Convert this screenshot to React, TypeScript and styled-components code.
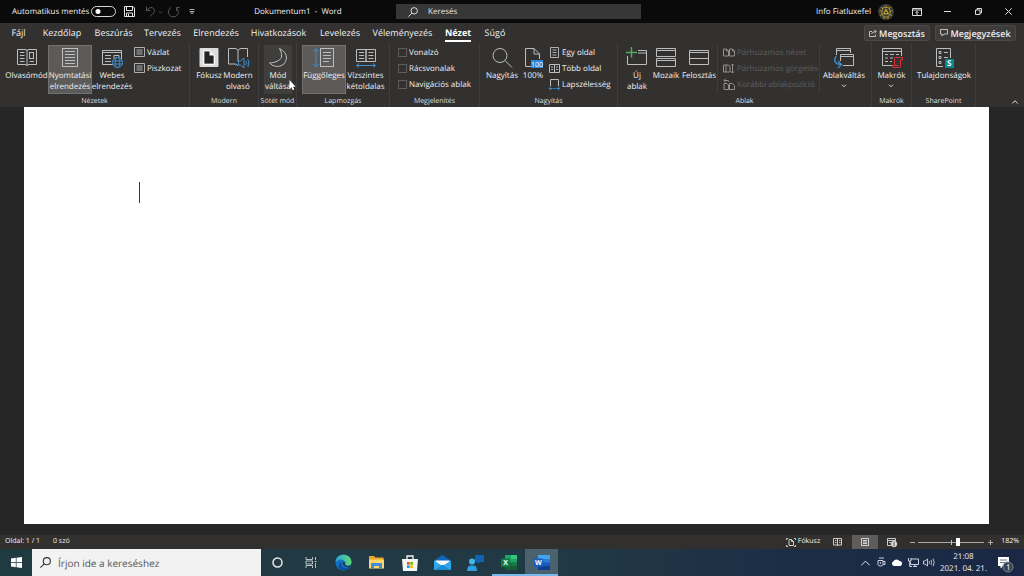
import React from 'react';
import styled, { createGlobalStyle, css } from 'styled-components';

const GlobalStyle = createGlobalStyle`
  *, *::before, *::after { box-sizing: border-box; }
  html, body { margin: 0; height: 100%; }
  body {
    font-family: 'Open Sans', 'Noto Sans', sans-serif;
    font-size: 8px;
    line-height: 11px;
    text-rendering: geometricPrecision;
    color: #f0f0f0;
    background: #262626;
    overflow: hidden;
  }
  button, input { font: inherit; color: inherit; text-rendering: inherit; margin: 0; padding: 0; border: 0; background: none; outline: none; }
`;

const Shell = styled.div`
  display: flex;
  flex-direction: column;
  min-height: 100vh;
`;

/* ---------- title bar ---------- */
const TitleBar = styled.header`
  display: flex;
  align-items: center;
  height: 23px;
  background: #0a0a0a;
`;
const QuickAccess = styled.div`
  display: flex;
  align-items: center;
  width: 200px;
  padding-left: 12px;
`;
const AutoSave = styled.label`
  display: flex;
  align-items: center;
  justify-content: space-between;
  width: 104px;
  white-space: nowrap;
`;
const Toggle = styled.input`
  appearance: none;
  width: 25px;
  height: 11px;
  border: 1px solid #d8d8d8;
  border-radius: 6px;
  background: radial-gradient(circle at 6px 50%, #fff 2px, transparent 3px);
`;
const QuickButton = styled.button<{ $w: number }>`
  display: flex;
  justify-content: center;
  align-items: center;
  width: ${(p) => p.$w}px;
  height: 20px;
`;
const DocTitle = styled.div`
  width: 196px;
  text-align: center;
  white-space: pre;
`;
const TopSearch = styled.label`
  display: flex;
  align-items: center;
  gap: 10px;
  flex: 0 1 245px;
  height: 15px;
  padding-left: 12px;
  background: #373737;
  input { flex: 1; min-width: 0; }
  input::placeholder { color: #e6e6e6; opacity: 1; }
`;
const WindowArea = styled.div`
  display: flex;
  align-items: center;
  margin-left: auto;
`;
const Account = styled.button`
  display: flex;
  align-items: center;
  gap: 7px;
  margin-right: 8px;
  white-space: nowrap;
`;

/* ---------- tabs ---------- */
const TabRow = styled.nav`
  display: flex;
  align-items: center;
  height: 20px;
  padding: 0 8px 0 3px;
  background: #323130;
`;
const Tab = styled.button<{ $w: number; $active?: boolean }>`
  display: flex;
  justify-content: center;
  width: ${(p) => p.$w}px;
  height: 20px;
  font-size: 9px;
  line-height: 20px;
  white-space: nowrap;
  ${(p) =>
    p.$active &&
    css`
      font-weight: 700;
      color: #fff;
      span { height: 19px; border-bottom: 2px solid #fff; }
    `}
`;
const TabActions = styled.div`
  display: flex;
  gap: 5px;
  margin-left: auto;
`;
const ActionButton = styled.button<{ $w: number }>`
  display: flex;
  align-items: center;
  justify-content: center;
  gap: 2px;
  width: ${(p) => p.$w}px;
  height: 16px;
  border: 1px solid #4a4948;
  border-radius: 2px;
  background: #3d3c3b;
  font-size: 9px;
  font-weight: 600;
  white-space: nowrap;
`;

/* ---------- ribbon ---------- */
const Ribbon = styled.section`
  display: flex;
  height: 64px;
  background: #323130;
`;
const GroupBox = styled.div<{ $w: number }>`
  display: flex;
  flex-direction: column;
  flex: none;
  width: ${(p) => p.$w}px;
  padding-top: 2px;
  border-right: 1px solid #3f3e3d;
`;
const GroupItems = styled.div<{ $pad: number }>`
  display: flex;
  flex: none;
  height: 52px;
  padding-left: ${(p) => p.$pad}px;
`;
const GroupName = styled.div`
  text-align: center;
  font-size: 7px;
  line-height: 10px;
  color: #dedede;
  white-space: nowrap;
`;
const BigButton = styled.button<{ $w: number; $tone?: 'selected' | 'hover' }>`
  position: relative;
  display: flex;
  flex-direction: column;
  align-items: center;
  flex: none;
  width: ${(p) => p.$w}px;
  height: 49px;
  padding-top: 2px;
  gap: 2px;
  white-space: nowrap;
  ${(p) => p.$tone === 'hover' && css`background: #3f3e3d;`}
  ${(p) =>
    p.$tone === 'selected' &&
    css`
      background: #5c5b5a;
      box-shadow: inset 0 0 0 1px #72716f;
    `}
`;
const BigLabel = styled.span`
  display: flex;
  flex-direction: column;
  align-items: center;
`;
const Stack = styled.div<{ $pad: number }>`
  display: flex;
  flex-direction: column;
  gap: 3px;
  padding-top: 1px;
  padding-left: ${(p) => p.$pad}px;
`;
const SmallButton = styled.button`
  display: flex;
  align-items: center;
  gap: 2px;
  height: 13px;
  white-space: nowrap;
  &:disabled { color: #5f5e5d; }
`;
const CheckRow = styled.label`
  display: flex;
  align-items: center;
  gap: 2px;
  height: 13px;
  white-space: nowrap;
  input {
    appearance: none;
    width: 9px;
    height: 9px;
    border: 1px solid #5e5d5c;
  }
`;
const WindowStack = styled(Stack)`
  width: 101px;
`;
const Divider = styled.div`
  width: 1px;
  margin-bottom: 4px;
  background: #3f3e3d;
`;
const CollapseButton = styled.button`
  align-self: flex-end;
  margin: 0 6px 3px auto;
`;

/* ---------- document ---------- */
const Workspace = styled.main`
  display: flex;
  flex: 1;
  padding: 0 35px 11px 24px;
  background: #262626;
`;
const Page = styled.div`
  flex: 1;
  padding: 75px 115px;
  background: #fff;
`;
const Caret = styled.div`
  width: 1px;
  height: 21px;
  background: #333;
`;

/* ---------- status bar ---------- */
const StatusBar = styled.footer`
  display: flex;
  align-items: center;
  height: 14px;
  padding: 0 5px;
  background: #32302f;
  font-size: 7px;
  line-height: 12px;
  white-space: nowrap;
`;
const PageCount = styled.span`
  width: 48px;
`;
const StatusTools = styled.div`
  display: flex;
  align-items: center;
  margin-left: auto;
`;
const StatusButton = styled.button<{ $w: number; $active?: boolean }>`
  display: flex;
  align-items: center;
  justify-content: center;
  gap: 2px;
  width: ${(p) => p.$w}px;
  height: 14px;
  background: ${(p) => (p.$active ? '#5e5d5c' : 'transparent')};
`;
const ZoomRange = styled.input`
  appearance: none;
  width: 66px;
  height: 9px;
  background:
    linear-gradient(#c4c4c4, #c4c4c4) 33px 50% / 1px 5px no-repeat,
    linear-gradient(#a8a8a8, #a8a8a8) 0 50% / 100% 1px no-repeat;
  &::-webkit-slider-thumb {
    appearance: none;
    width: 4px;
    height: 8px;
    background: #fff;
  }
`;
const ZoomValue = styled.button`
  width: 23px;
  text-align: right;
`;

/* ---------- task bar ---------- */
const TaskBar = styled.footer`
  display: flex;
  height: 27px;
  background: linear-gradient(90deg, #203a42 0%, #213944 55%, #1c2e45 76%, #1a2745 100%);
`;
const StartButton = styled.button`
  display: flex;
  align-items: center;
  justify-content: center;
  width: 32px;
`;
const TaskSearch = styled.label`
  display: flex;
  align-items: center;
  gap: 7px;
  width: 229px;
  padding-left: 8px;
  background: #f2f2f2;
  color: #444;
  font-size: 10px;
  input { flex: 1; min-width: 0; height: 16px; }
  input::placeholder { color: #555; opacity: 1; }
`;
const TaskButton = styled.button<{ $state?: 'open' | 'active' }>`
  display: flex;
  align-items: center;
  justify-content: center;
  width: 33px;
  ${(p) =>
    p.$state &&
    css`
      padding-top: 2px;
      border-bottom: 2px solid #76b9ed;
      background: ${p.$state === 'active' ? '#4a626d' : 'transparent'};
    `}
`;
const Tray = styled.div`
  display: flex;
  align-items: center;
  margin-left: auto;
`;
const TrayButton = styled.button`
  display: flex;
  justify-content: center;
  width: 16px;
`;
const Clock = styled.time`
  width: 53px;
  text-align: center;
  line-height: 12px;
  white-space: nowrap;
`;
const Notifications = styled.button`
  display: flex;
  justify-content: center;
  width: 34px;
  padding: 3px 4px 0 0;
`;

/* ---------- icons ---------- */
const BLUE = '#3c8fd0';

const Drawing = styled.svg<{ $line?: string }>`
  display: block;
  flex: none;
  fill: none;
  overflow: visible;
  stroke: ${(p) => p.$line ?? '#bdbdbd'};
`;
const Pointer = styled(Drawing)`
  position: absolute;
  left: 25px;
  top: 35px;
`;

type IconProps = { w?: number; h?: number; line?: string; children: React.ReactNode };
const Icon = ({ w = 20, h = 21, line, children }: IconProps) => (
  <Drawing width={w} height={h} viewBox={`0 0 ${w} ${h}`} $line={line} aria-hidden="true">
    {children}
  </Drawing>
);

const SearchGlyph = ({ color, size = 10 }: { color: string; size?: number }) => (
  <Drawing width={size} height={size} viewBox="0 0 10 10" $line={color} aria-hidden="true">
    <circle cx="6.2" cy="3.8" r="3.2" />
    <path d="M3.8 6.2L.4 9.6" />
  </Drawing>
);
const ReadIcon = () => (
  <Icon>
    <path d="M.5 2.500H8Q10 2.500 10 4Q10 2.500 12 2.500H19.500V17.500H12Q10 17.500 10 19Q10 17.500 8 17.500H.5ZM10 4V18" />
    <path d="M3 5.500H7.500M3 8.500H7.500M3 11.500H7.500M3 14.500H7.500M12.500 14.500H17" />
    <rect x="12.500" y="5.500" width="4" height="6" />
  </Icon>
);
const PrintLayoutIcon = () => (
  <Icon>
    <rect x="2.500" y="1.500" width="15" height="18" />
    <path d="M5 4.500H15M5 7.500H15M5 10.500H15M5 13.500H15M5 16.500H15" />
  </Icon>
);
const WebIcon = () => (
  <Icon>
    <path d="M.5 3.500H19.500V17.500H.5ZM.5 5.500H19.500" />
    <path d="M3 8.500H9M3 11.500H9M3 14.500H9" />
    <path d="M12 8.500H17V12H12Z" />
    <g stroke={BLUE}>
      <circle cx="15.500" cy="15.500" r="5" fill="#323130" />
      <ellipse cx="15.500" cy="15.500" rx="2.200" ry="5" />
      <path d="M10.500 14H20.500M10.500 17H20.500" />
    </g>
  </Icon>
);
const FocusIcon = () => (
  <Icon>
    <rect x=".5" y="1" width="19" height="19" rx="1" fill="#dcdcdc" stroke="none" />
    <path d="M5 4H10.500L15 8.500V17H5Z" fill="#242424" />
    <path d="M4.500 3.500H11L15.500 8V17.500H4.500Z" stroke="#f8f8f8" />
    <path d="M10.500 3.500V8.500H15.500Z" fill="#f8f8f8" stroke="none" />
  </Icon>
);
const ReaderIcon = () => (
  <Icon>
    <path d="M10 3.500Q9 1.500 7 1.500H.5V17H7Q9 17 10 19M10 3.500Q11 1.500 13 1.500H19.500V10M10 3.500V14.500" />
    <g stroke={BLUE}>
      <path d="M10.500 14V18H12.500L16 21V11L12.500 14Z" />
      <path d="M17.800 14Q19 16 17.800 18M19.800 12Q22 16 19.800 20" />
    </g>
  </Icon>
);
const MoonIcon = () => (
  <Icon>
    <path d="M11.500 1.500Q18.500 5 18.500 11Q17.500 19 9.500 19.500Q4.500 19.500 1.500 16Q10.500 15.500 13.500 10.500Q14.500 6.500 11.500 1.500Z" />
  </Icon>
);
const VerticalIcon = () => (
  <Icon>
    <path d="M2 2.500V18.500M-.5 4.500L2 1.500L4.500 4.500M-.5 17L2 20L4.500 17" stroke={BLUE} />
    <rect x="6.500" y="1.500" width="13" height="18" />
    <path d="M9 5.500H17M9 8.500H17M9 11.500H17M9 14.500H15" />
  </Icon>
);
const SideIcon = () => (
  <Icon>
    <path d="M.5 2.500H10V14.500H.5ZM10 2.500H19.500V14.500H10Z" />
    <path d="M3 5.500H8M3 8.500H8M3 11.500H8M12.500 5.500H17.500M12.500 8.500H17.500M12.500 11.500H17.500" />
    <path d="M1 18.500H19M3 16.500L.5 18.500L3 20.500M17 16.500L19.500 18.500L17 20.500" stroke={BLUE} />
  </Icon>
);
const ZoomIcon = () => (
  <Icon>
    <circle cx="8" cy="8.500" r="7" />
    <path d="M13 13.500L20 20.500" />
  </Icon>
);
const PercentIcon = () => (
  <Icon>
    <path d="M8 19.500H2.500V1.500H11L16.500 7V12M11 1.500V7H16.500" />
    <rect x="8" y="13" width="12" height="8" fill="#2b88d8" stroke="none" />
    <text x="8" y="20" fill="#fff" stroke="none" fontSize="7">100</text>
  </Icon>
);
const NewWindowIcon = () => (
  <Icon>
    <path d="M.5 9V17.500H19.500V3.500H11M11 6H19.500" />
    <path d="M4.500 0V10.500M-1 5.500H10" stroke="#4fae5e" strokeWidth="1.400" />
  </Icon>
);
const TileIcon = () => (
  <Icon>
    <path d="M.5 1.500H19.500V9.500H.5ZM.5 3.500H19.500M.5 11.500H19.500V19.500H.5ZM.5 13.500H19.500" />
  </Icon>
);
const SplitIcon = () => (
  <Icon>
    <path d="M.5 3.500H19.500V17.500H.5ZM.5 5.500H19.500M.5 11.500H19.500" />
  </Icon>
);
const SwitchIcon = () => (
  <Icon>
    <path d="M2.500 8V1.500H16.500V6M2.500 3.500H16.500M6.500 14V7.500H19.500V18.500H9M6.500 9.500H19.500" />
    <path d="M2 9Q-2 16.500 6.500 17.500M4 14L7.500 17.500L4 21" stroke={BLUE} strokeWidth="1.300" />
  </Icon>
);
const MacroIcon = () => (
  <Icon>
    <path d="M.5 1.500H19.500V9M.5 1.500V18.500H10M.5 4.500H19.500" />
    <path d="M3 7.500H6M8 7.500H12M14 7.500H17M3 11H6M8 11H11M3 14.500H6M8 14.500H10" />
    <path d="M12.500 18V11.500Q12.500 10.500 14 10.500H20.500V13H18.500V19Q18.500 20.500 17 20.500H11Q10.500 20.500 10.500 18.500H16" stroke="#d13438" fill="#3e3030" />
  </Icon>
);
const SharePointIcon = () => (
  <Icon>
    <path d="M9 19.500H2.500V1.500H16.500V11M5 4.500H7V6.500H5ZM10 5.500H14M5 9.500H7V11.500H5ZM10 10.500H14M5 14.500H7V16.500H5Z" />
    <rect x="11" y="12" width="9" height="9" fill="#058a8f" stroke="none" />
    <text x="13" y="19" fill="#fff" stroke="none" fontSize="8" fontWeight="700">S</text>
  </Icon>
);
const DraftIcon = () => (
  <Icon w={11} h={11}>
    <path d="M.5 .5H10.500V9.500H.5ZM2.500 3H8.500M2.500 5H8.500M2.500 7H8.500" strokeWidth=".9" />
  </Icon>
);
const OnePageIcon = () => (
  <Icon w={11} h={11}>
    <path d="M1.500 .5H9.500V10.500H1.500ZM3.500 3H7.500M3.500 5.500H7.500M3.500 8H7.500" strokeWidth=".9" />
  </Icon>
);
const MultiPageIcon = () => (
  <Icon w={11} h={11}>
    <path d="M.5 1.500H5.500V9.500H.5ZM5.500 1.500H10.500V9.500H5.500Z" />
    <path d="M2 4H4M2 6.500H4M7 4H9M7 6.500H9" strokeWidth=".9" />
  </Icon>
);
const PageWidthIcon = () => (
  <Icon w={11} h={11}>
    <path d="M1.500 7V.5H9.500V7" />
    <path d="M.5 9.500H3.500M7.500 9.500H10.500M2 7.500L.2 9.500L2 11.200M9 7.500L10.800 9.500L9 11.200M4.500 9.500H6.500" stroke={BLUE} />
  </Icon>
);
const PAIR_PATHS = {
  view: 'M.5 2H3.500L5.500 4V9H.5ZM3.500 2V4H5.500M6.500 2H9.500L11.500 4V9H6.500ZM9.500 2V4H11.500',
  scroll: 'M.5 2H3V9H.5ZM3 2H5.500L7 4V9H3M9.500 1V10M8 2.500L9.500 1L11 2.500M8 8.500L9.500 10L11 8.500',
  reset: 'M1 10V4.500H4L5.500 6V10.500H1M6.500 4.500H9.500L11.500 6.500V10.500H6.500ZM1 1.500H4Q6 1.500 6 3M2.500 0L.8 1.500L2.500 3',
};
const PairIcon = ({ kind }: { kind: keyof typeof PAIR_PATHS }) => (
  <Icon w={12} h={11} line="#929190">
    <path d={PAIR_PATHS[kind]} />
  </Icon>
);
const Chevron = ({ up, w = 6 }: { up?: boolean; w?: number }) => (
  <Drawing width={w} height={(w * 2) / 3} viewBox="0 0 6 4" $line="#e0e0e0" aria-hidden="true">
    <path d={up ? 'M.3 3.500L3 .7L5.700 3.500' : 'M1 .7L3 2.700L5 .7'} strokeWidth={6 / w} />
  </Drawing>
);
const MenuMark = styled.span`
  display: flex;
  align-items: center;
  height: 10px;
`;

const Avatar = () => (
  <Icon w={16} h={16}>
    <circle cx="8" cy="8" r="8" fill="#3b3b37" stroke="none" />
    <g stroke="#b29a2c" strokeWidth=".9">
      <path d="M8 1V4M5.500 3.500H10.500L12 6.500V10L10 13H6L4 10V6.500ZM4 7H1.500M14.500 7H12M4 10L2 12M12 10L14 12M6 13V15M10 13V15M3 3L5 5M13 3L11 5" />
      <path d="M8 5L10.500 10H5.500Z" fill="#d8c252" />
    </g>
    <circle cx="8" cy="8.500" r="1" fill="#222" stroke="none" />
  </Icon>
);

/* ---------- ribbon parts ---------- */
type BigProps = {
  w: number;
  icon: React.ReactNode;
  lines: string[];
  tone?: 'selected' | 'hover';
  menu?: boolean;
  children?: React.ReactNode;
};
const Big = ({ w, icon, lines, tone, menu, children }: BigProps) => (
  <BigButton $w={w} $tone={tone}>
    {icon}
    <BigLabel>
      {lines.map((line) => (
        <span key={line}>{line}</span>
      ))}
      {menu && (
        <MenuMark>
          <Chevron />
        </MenuMark>
      )}
    </BigLabel>
    {children}
  </BigButton>
);
const Group = ({ w, pad, name, children }: { w: number; pad: number; name: string; children: React.ReactNode }) => (
  <GroupBox $w={w}>
    <GroupItems $pad={pad}>{children}</GroupItems>
    <GroupName>{name}</GroupName>
  </GroupBox>
);

const TABS: [string, number][] = [
  ['Fájl', 31],
  ['Kezdőlap', 56],
  ['Beszúrás', 47],
  ['Tervezés', 51],
  ['Elrendezés', 56],
  ['Hivatkozások', 69],
  ['Levelezés', 54],
  ['Véleményezés', 71],
  ['Nézet', 40],
  ['Súgó', 34],
];

export default function App() {
  return (
    <Shell>
      <GlobalStyle />
      <TitleBar>
        <QuickAccess>
          <AutoSave>
            Automatikus mentés
            <Toggle type="checkbox" role="switch" />
          </AutoSave>
          <QuickButton $w={27} aria-label="Mentés">
            <Icon w={11} h={11} line="#e8e8e8">
              <path d="M.5 .5H9L10.500 2V10.500H.5ZM2.500 .5V4.500H8.500V.5M2.500 10.500V7H8.500V10.500M4.500 8V10.500" />
            </Icon>
          </QuickButton>
          <QuickButton $w={20} aria-label="Visszavonás">
            <Icon w={17} h={11} line="#555">
              <path d="M1.500 .5V4.500H5.500M1.500 4.500Q4 1 7 1.500Q11 3 9 6.500L5 10.500M14 5.500L15.500 7L17 5.500" />
            </Icon>
          </QuickButton>
          <QuickButton $w={20} aria-label="Ismétlés">
            <Icon w={11} h={11} line="#555">
              <path d="M3 1.500A5 5 0 1 0 8.500 2M8.500 5V1.500H11.500" />
            </Icon>
          </QuickButton>
          <QuickButton $w={17} aria-label="Eszköztár testreszabása">
            <Icon w={6} h={6} line="#ccc">
              <path d="M.5 .5H5.500M1 2.500H5L3 5Z" strokeWidth=".8" />
            </Icon>
          </QuickButton>
        </QuickAccess>
        <DocTitle>Dokumentum1  -  Word</DocTitle>
        <TopSearch>
          <SearchGlyph color="#ddd" />
          <input placeholder="Keresés" aria-label="Keresés" />
        </TopSearch>
        <WindowArea>
          <Account>
            Info Fiatluxefel
            <Avatar />
          </Account>
          <QuickButton $w={30} aria-label="Menüszalag megjelenítése">
            <Icon w={10} h={8} line="#ddd">
              <path d="M.5 .5H9.500V7.500H.5ZM.5 2H9.500M5 7V3.500M3.500 5L5 3.500L6.500 5" />
            </Icon>
          </QuickButton>
          <QuickButton $w={31} aria-label="Kis méret">
            <Icon w={7} h={7} line="#ddd">
              <path d="M0 3.500H7" />
            </Icon>
          </QuickButton>
          <QuickButton $w={30} aria-label="Előző méret">
            <Icon w={7} h={7} line="#ddd">
              <path d="M.5 2H5V6.500H.5ZM2 2V.5H6.500V5H5" />
            </Icon>
          </QuickButton>
          <QuickButton $w={31} aria-label="Bezárás">
            <Icon w={7} h={7} line="#ddd">
              <path d="M.3 .3L6.700 6.700M6.700 .3L.3 6.700" />
            </Icon>
          </QuickButton>
        </WindowArea>
      </TitleBar>

      <TabRow>
        {TABS.map(([name, w]) => (
          <Tab key={name} $w={w} $active={name === 'Nézet'}>
            <span>{name}</span>
          </Tab>
        ))}
        <TabActions>
          <ActionButton $w={66}>
            <Icon w={8} h={8} line="#ccc">
              <path d="M3 2.500H.5V7.500H6.500V5.500M2.500 5Q3 2.500 7 2.500M5.500 .7L7.300 2.500L5.500 4.300" strokeWidth=".9" />
            </Icon>
            Megosztás
          </ActionButton>
          <ActionButton $w={81}>
            <Icon w={8} h={8} line="#ccc">
              <path d="M.5 .5H7.500V5H4L2 7V5H.5Z" strokeWidth=".9" />
            </Icon>
            Megjegyzések
          </ActionButton>
        </TabActions>
      </TabRow>

      <Ribbon>
        <Group w={190} pad={5} name="Nézetek">
          <Big w={43} icon={<ReadIcon />} lines={['Olvasómód']} />
          <Big w={44} icon={<PrintLayoutIcon />} lines={['Nyomtatási', 'elrendezés']} tone="selected" />
          <Big w={40} icon={<WebIcon />} lines={['Webes', 'elrendezés']} />
          <Stack $pad={2}>
            <SmallButton><DraftIcon />Vázlat</SmallButton>
            <SmallButton><DraftIcon />Piszkozat</SmallButton>
          </Stack>
        </Group>
        <Group w={69} pad={5} name="Modern">
          <Big w={28} icon={<FocusIcon />} lines={['Fókusz']} />
          <Big w={30} icon={<ReaderIcon />} lines={['Modern', 'olvasó']} />
        </Group>
        <Group w={38} pad={5} name="Sötét mód">
          <Big w={28} icon={<MoonIcon />} lines={['Mód', 'váltása']} tone="hover">
            <Pointer width="7" height="11" viewBox="0 0 7 11" aria-hidden="true">
              <path d="M.5 0V9L2.500 7.200L3.800 10.200L5.300 9.500L4 6.700H6.700Z" fill="#fff" stroke="none" />
            </Pointer>
          </Big>
        </Group>
        <Group w={93} pad={5} name="Lapmozgás">
          <Big w={44} icon={<VerticalIcon />} lines={['Függőleges']} tone="selected" />
          <Big w={39} icon={<SideIcon />} lines={['Vízszintes', 'kétoldalas']} />
        </Group>
        <Group w={90} pad={0} name="Megjelenítés">
          <Stack $pad={8}>
            {['Vonalzó', 'Rácsvonalak', 'Navigációs ablak'].map((t) => (
              <CheckRow key={t}>
                <input type="checkbox" />
                {t}
              </CheckRow>
            ))}
          </Stack>
        </Group>
        <Group w={138} pad={5} name="Nagyítás">
          <Big w={34} icon={<ZoomIcon />} lines={['Nagyítás']} />
          <Big w={28} icon={<PercentIcon />} lines={['100%']} />
          <Stack $pad={2}>
            <SmallButton><OnePageIcon />Egy oldal</SmallButton>
            <SmallButton><MultiPageIcon />Több oldal</SmallButton>
            <SmallButton><PageWidthIcon />Lapszélesség</SmallButton>
          </Stack>
        </Group>
        <Group w={254} pad={5} name="Ablak">
          <Big w={28} icon={<NewWindowIcon />} lines={['Új', 'ablak']} />
          <Big w={30} icon={<TileIcon />} lines={['Mozaik']} />
          <Big w={36} icon={<SplitIcon />} lines={['Felosztás']} />
          <Divider />
          <WindowStack $pad={5}>
            <SmallButton disabled><PairIcon kind="view" />Párhuzamos nézet</SmallButton>
            <SmallButton disabled><PairIcon kind="scroll" />Párhuzamos görgetés</SmallButton>
            <SmallButton disabled><PairIcon kind="reset" />Korábbi ablakpozíció</SmallButton>
          </WindowStack>
          <Divider />
          <Big w={48} icon={<SwitchIcon />} lines={['Ablakváltás']} menu />
        </Group>
        <Group w={40} pad={4} name="Makrók">
          <Big w={31} icon={<MacroIcon />} lines={['Makrók']} menu />
        </Group>
        <Group w={64} pad={4} name="SharePoint">
          <Big w={56} icon={<SharePointIcon />} lines={['Tulajdonságok']} />
        </Group>
        <CollapseButton aria-label="Menüszalag összecsukása">
          <Chevron up />
        </CollapseButton>
      </Ribbon>

      <Workspace>
        <Page>
          <Caret />
        </Page>
      </Workspace>

      <StatusBar>
        <PageCount>Oldal: 1 / 1</PageCount>
        <span>0 szó</span>
        <StatusTools>
          <StatusButton $w={38}>
            <Icon w={10} h={9} line="#ddd">
              <path d="M2 .5H.5V2M8 .5H9.500V2M.5 7V8.500H2M9.500 7V8.500H8M3 1.500H5.500L7.500 3.500V7.500H3ZM5.500 1.500V3.500H7.500" strokeWidth=".9" />
            </Icon>
            Fókusz
          </StatusButton>
          <StatusButton $w={30} aria-label="Olvasási nézet">
            <Icon w={9} h={8} line="#ccc">
              <path d="M.5 .5H8.500V7H.5ZM4.500 .5V8M2 2.500H3.500M2 4.500H3.500M6 2.500H7.500M6 4.500H7.500" />
            </Icon>
          </StatusButton>
          <StatusButton $w={26} $active aria-label="Nyomtatási elrendezés nézet">
            <Icon w={8} h={8} line="#e0e0e0">
              <path d="M.5 .5H7.500V7.500H.5ZM2 2.500H6M2 4H6M2 5.500H6" strokeWidth=".9" />
            </Icon>
          </StatusButton>
          <StatusButton $w={28} aria-label="Webes elrendezés nézet">
            <Icon w={10} h={9} line="#ccc">
              <path d="M4 7.500H.5V.5H8.500V3M.5 2.500H8.500M2 4.500H4" />
              <circle cx="7" cy="6" r="2.800" fill="#ddd" />
              <path d="M7 4V8" stroke="#555" />
            </Icon>
          </StatusButton>
          <StatusButton $w={12} aria-label="Kicsinyítés">
            <Icon w={5} h={5} line="#aaa"><path d="M0 2.500H5" /></Icon>
          </StatusButton>
          <ZoomRange type="range" min={0} max={100} defaultValue={61} aria-label="Nagyítás mértéke" />
          <StatusButton $w={12} aria-label="Nagyítás">
            <Icon w={5} h={5} line="#aaa"><path d="M0 2.500H5M2.500 0V5" /></Icon>
          </StatusButton>
          <ZoomValue>182%</ZoomValue>
        </StatusTools>
      </StatusBar>

      <TaskBar>
        <StartButton aria-label="Start">
          <Icon w={11} h={11} line="none">
            <path d="M0 1.500L4.800 .8V5.200H0ZM5.500 .7L11 0V5.200H5.500ZM0 5.900H4.800V10.300L0 9.600ZM5.500 5.900H11V11L5.500 10.300Z" fill="#fff" />
          </Icon>
        </StartButton>
        <TaskSearch>
          <SearchGlyph color="#333" size={11} />
          <input placeholder="Írjon ide a kereséshez" aria-label="Írjon ide a kereséshez" />
        </TaskSearch>
        <TaskButton aria-label="Cortana">
          <Icon w={11} h={11} line="#e8e8e8"><circle cx="5.500" cy="5.500" r="4.500" strokeWidth="1.500" /></Icon>
        </TaskButton>
        <TaskButton aria-label="Feladatnézet">
          <Icon w={12} h={11} line="#c8d0d3">
            <path d="M1 0V2.500H7.500V0M1 11V8.500H7.500V11M1 4H7.500V7H1ZM10.500 0V3M10.500 6V11M9.500 4.500H11.500" strokeWidth=".9" />
          </Icon>
        </TaskButton>
        <TaskButton aria-label="Edge">
          <Icon w={17} h={17} line="none">
            <defs>
              <linearGradient id="edgeTop" x1="0" x2="1"><stop offset="0" stopColor="#2aa5e0" /><stop offset="1" stopColor="#63d86d" /></linearGradient>
            </defs>
            <circle cx="8.500" cy="8.500" r="8" fill="#1670c5" />
            <path d="M.5 8C1-1 15-2 16.500 7.500C17 12 11 12.500 10 10.500C12 7 6 2.500 .5 8Z" fill="url(#edgeTop)" />
            <path d="M6.500 8C5 11 8 16 14.500 13.500Q12 17 8 16.500C2 15 3 9 6.500 8Z" fill="#0b4f9e" />
            <path d="M8.500 8Q11 8 10 10.500Q12 13 15.500 11L14.500 13.500Q9 13.500 7.500 9Z" fill="#203a42" />
          </Icon>
        </TaskButton>
        <TaskButton aria-label="Fájlkezelő">
          <Icon w={15} h={13} line="none">
            <path d="M0 0H5L6.500 1.500H14.500V12H0Z" fill="#e9a827" />
            <path d="M0 3.500H15V12.500H0Z" fill="#ffd76a" />
            <path d="M2 12.500V7H13V12.500H10V10H5V12.500Z" fill="#3b8fdc" />
          </Icon>
        </TaskButton>
        <TaskButton aria-label="Microsoft Store">
          <Icon w={16} h={16} line="none">
            <path d="M5 5V1H11V5" stroke="#f4f4f4" strokeWidth="1.300" />
            <path d="M0 4H16L15 16H1Z" fill="#f5f5f5" />
            <path d="M5 7H7.700V9.700H5Z" fill="#f25022" /><path d="M8.300 7H11V9.700H8.300Z" fill="#7fba00" />
            <path d="M5 10.300H7.700V13H5Z" fill="#00a4ef" /><path d="M8.300 10.300H11V13H8.300Z" fill="#ffb900" />
          </Icon>
        </TaskButton>
        <TaskButton aria-label="Posta">
          <Icon w={17} h={15} line="none">
            <path d="M0 5.500L8.500 0L17 5.500V15H0Z" fill="#1065b8" />
            <path d="M1.500 5.500H15.500V10H1.500Z" fill="#f7fbff" />
            <path d="M0 5.500L8.500 11L17 5.500V15H0Z" fill="#2fa8e8" />
            <path d="M0 15L8.500 10L17 15Z" fill="#1b8bd6" />
          </Icon>
        </TaskButton>
        <TaskButton aria-label="Kapcsolatok">
          <Icon w={17} h={16} line="none">
            <path d="M8 0H17V7H13L10.500 9V7H8Z" fill="#0f62b4" />
            <circle cx="5" cy="6.500" r="3" fill="#45b5ee" />
            <path d="M0 16Q0 10.500 4 10.500H7Q10 10.500 10 16Z" fill="#2a9fe0" />
          </Icon>
        </TaskButton>
        <TaskButton $state="open" aria-label="Excel">
          <Icon w={16} h={15} line="none">
            <path d="M4 0H16V15H4Z" fill="#21a366" /><path d="M10 0H16V4H10Z" fill="#33c481" />
            <path d="M4 7.500H16V15H4Z" fill="#185c37" /><path d="M10 7.500H16V11H10Z" fill="#107c41" />
            <rect y="3.500" width="9" height="8.500" rx=".8" fill="#107c41" />
            <text x="2.200" y="10.300" fontSize="7" fontWeight="700" fill="#fff">X</text>
          </Icon>
        </TaskButton>
        <TaskButton $state="active" aria-label="Word">
          <Icon w={16} h={15} line="none">
            <path d="M4 0H16V15H4Z" fill="#2b7cd3" /><path d="M4 0H16V4H4Z" fill="#41a5ee" />
            <path d="M4 7.500H16V15H4Z" fill="#185abd" /><path d="M4 11H16V15H4Z" fill="#103f91" />
            <rect y="3.500" width="9" height="8.500" rx=".8" fill="#185abd" />
            <text x="1" y="10.300" fontSize="7" fontWeight="700" fill="#fff">W</text>
          </Icon>
        </TaskButton>
        <Tray>
          <TrayButton aria-label="Rejtett ikonok"><Chevron up w={9} /></TrayButton>
          <TrayButton aria-label="Értekezlet">
            <Icon w={9} h={11} line="#ccd2dd">
              <path d="M1 3.500H6V7.500Q6 9 3.500 9Q1 9 1 7.500ZM6 4.500H8V7.500H6M2 1H7" /><circle cx="3.500" cy="6" r=".5" />
            </Icon>
          </TrayButton>
          <TrayButton aria-label="OneDrive">
            <Icon w={12} h={7} line="none"><path d="M3 7A2.500 2.500 0 0 1 2.500 2.200A3.500 3.500 0 0 1 8.500 2A2.600 2.600 0 0 1 9.500 7Z" fill="#fff" /></Icon>
          </TrayButton>
          <TrayButton aria-label="Hálózat">
            <Icon w={11} h={9} line="#e0e4ea"><path d="M3 1H10.500V6.500H2.500V4M5 8.500H9M7 6.500V8.500M.5 0V3H3V0M1.700 3V8.500H4" strokeWidth=".9" /></Icon>
          </TrayButton>
          <TrayButton aria-label="Hangerő">
            <Icon w={12} h={9} line="#ccd2dd"><path d="M.5 3H2L4.500 1V8L2 6H.5ZM6 3Q7 4.500 6 6M8 2Q9.500 4.500 8 7M10 .7Q12.500 4.500 10 8.300" strokeWidth=".9" /></Icon>
          </TrayButton>
          <Clock>21:08<br />2021. 04. 21.</Clock>
          <Notifications aria-label="Értesítések">
            <Icon w={15} h={15} line="none">
              <path d="M0 0H11V9H5L2.500 11.500V9H0Z" fill="#fff" />
              <path d="M2 3H9M2 5.500H9" stroke="#71798a" />
              <circle cx="10" cy="10" r="5" fill="#3a4354" stroke="#7c8696" />
              <text x="8" y="12.800" fontSize="8" fill="#fff">1</text>
            </Icon>
          </Notifications>
        </Tray>
      </TaskBar>
    </Shell>
  );
}
